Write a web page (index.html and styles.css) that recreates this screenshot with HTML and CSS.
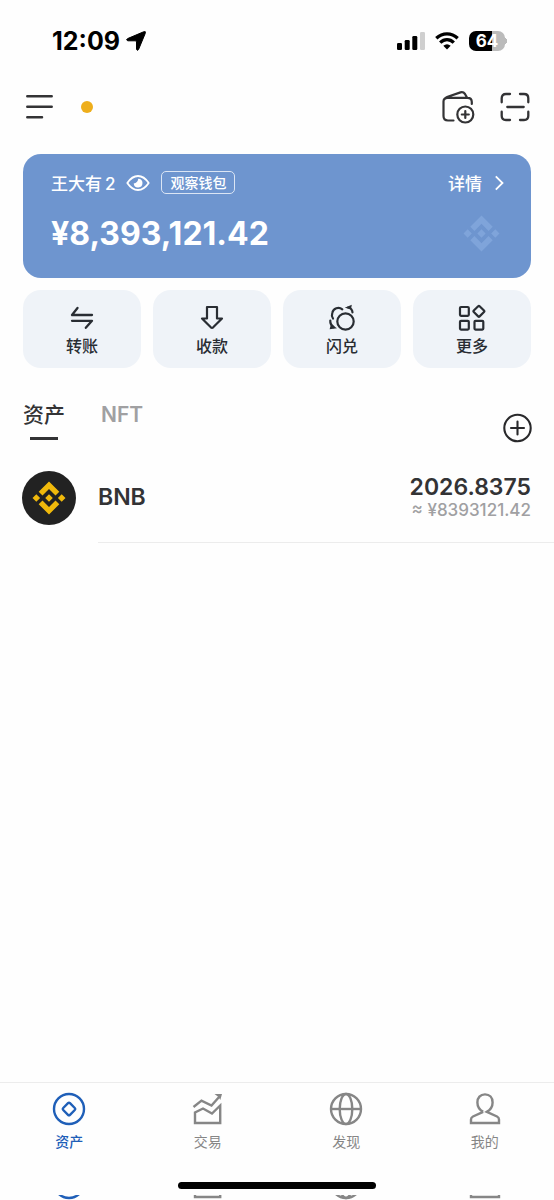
FILE: index.html
```html
<!DOCTYPE html>
<html lang="zh-CN">
<head>
<meta charset="utf-8">
<meta name="viewport" content="width=device-width, initial-scale=1">
<title>资产</title>
<link rel="stylesheet" href="styles.css">
</head>
<body>
<svg class="sprite" aria-hidden="true">
  <symbol id="bnb" viewBox="0 0 34 34">
    <path d="M17 0.5 27.3 10.8 23.5 14.6 17 8.1 10.5 14.6 6.7 10.8ZM6.7 23.2 10.5 19.4 17 25.9 23.5 19.4 27.3 23.2 17 33.5ZM17 13.2 20.8 17 17 20.8 13.2 17ZM4.3 13.2 8.1 17 4.3 20.8 0.5 17ZM29.7 13.2 33.5 17 29.7 20.8 25.9 17Z" fill="currentColor"/>
  </symbol>
  <symbol id="nav-assets" viewBox="0 0 34 34">
    <g fill="none" stroke="currentColor" stroke-width="2.4"><circle cx="17" cy="17" r="15"/><rect x="12.2" y="12.2" width="9.6" height="9.6" rx="1.4" transform="rotate(45 17 17)"/></g>
  </symbol>
  <symbol id="nav-trade" viewBox="0 0 34 34">
    <path d="M2.5 15 10.5 8.6 20.5 13.6 28.5 4.5M4 31V20.5L12 16.5 21 21.5 29.2 13.5V31Z" fill="none" stroke="currentColor" stroke-width="2.4"/>
    <path d="M23.5 2H31L29.3 8 27.5 5Z" fill="currentColor"/>
  </symbol>
  <symbol id="nav-discover" viewBox="0 0 34 34">
    <g fill="none" stroke="currentColor" stroke-width="2.4"><circle cx="17" cy="17" r="15"/><ellipse cx="17" cy="17" rx="6.3" ry="15"/><path d="M2 17H32"/></g>
  </symbol>
  <symbol id="nav-me" viewBox="0 0 34 34">
    <path d="M15.2 19.8C10.5 17.2 9.4 14 9.4 10.4C9.4 5.6 12.3 2.4 17 2.4S24.6 5.6 24.6 10.4C24.6 14 23.5 17.2 18.8 19.8L29 24.5Q31 25.6 31 27.5V31H3V27.5Q3 25.6 5 24.5L15.2 19.8" fill="none" stroke="currentColor" stroke-width="2.4"/>
  </symbol>
</svg>

<div class="app">
  <header>
    <div class="status">
      <div class="status-side">
        <time class="clock">12:09</time>
        <svg width="20" height="20" viewBox="0 0 20 20"><path d="M17.6.8Q20.2-.2 19.2 2.5L12.6 18.4Q11.6 20.2 10.5 18.4V11Q10.5 9.8 9.3 9.8H1.8Q-.5 9 1.6 7.6Z" stroke="#000" stroke-linejoin="round"/></svg>
      </div>
      <div class="status-side status-icons">
        <svg width="28" height="18" viewBox="0 0 28 18"><rect y="11" width="5" height="7" rx="1.3"/><rect x="7.7" y="8" width="5" height="10" rx="1.3"/><rect x="15.3" y="4" width="5" height="14" rx="1.3"/><rect x="23" width="5" height="18" rx="1.3" fill="#cfcfcf"/></svg>
        <svg width="24" height="18" viewBox="0 0 24 18"><g fill="none" stroke="#000" stroke-width="3.3"><path d="M1.3 6.2Q6 1.8 12 1.8T22.7 6.2"/><path d="M5.2 10.6Q8.2 7.6 12 7.6T18.8 10.6"/></g><path d="M8.3 13.8Q12 10.8 15.7 13.8L12 17.6Z"/></svg>
        <div class="battery"><span class="battery-level">64</span></div>
      </div>
    </div>
    <div class="toolbar">
      <div class="toolbar-side">
        <button class="icon-button" aria-label="菜单"><svg width="28" height="26" viewBox="0 0 28 26"><path d="M2.3 2.2H26.7M2.3 12.8H26.7M2.3 23.2H17" fill="none" stroke="#333335" stroke-width="2.5" stroke-linecap="round"/></svg></button>
        <span class="network-dot"></span>
      </div>
      <div class="toolbar-side">
        <button class="icon-button" aria-label="添加钱包"><svg width="34" height="34" viewBox="0 0 34 34"><g fill="none" stroke="#333335" stroke-width="2.2" stroke-linecap="round" stroke-linejoin="round"><path d="M11.5 30.5H6Q1.5 30.5 1.5 26V11.5Q1.5 7.8 5.5 7.8H25.5Q29.8 7.8 29.8 12V14M2.4 9.3Q3 7.7 5 7L18.5 2.4Q21.2 1.5 23 4L25 7.5"/><circle cx="23.3" cy="24.5" r="8"/><path d="M19.8 24.5H26.8M23.3 21V28"/></g></svg></button>
        <button class="icon-button" aria-label="扫一扫"><svg width="30" height="30" viewBox="0 0 30 30"><path d="M10 2H6Q1.7 2 1.7 6.3V10.3M20 2H24Q28.3 2 28.3 6.3V10.3M1.7 19.7V23.7Q1.7 28 6 28H10M28.3 19.7V23.7Q28.3 28 24 28H20M7.3 15H23.7" fill="none" stroke="#333335" stroke-width="2.3" stroke-linecap="round"/></svg></button>
      </div>
    </div>
  </header>

  <main>
    <section class="card">
      <div class="card-top">
        <span class="wallet-name">王大有<span class="wallet-number">2</span></span>
        <button class="icon-button" aria-label="隐藏余额"><svg width="24" height="18" viewBox="0 0 24 18"><path d="M1.3 9Q6 2 12 2T22.7 9Q18 16 12 16T1.3 9Z" fill="none" stroke="#fff" stroke-width="1.8" stroke-linejoin="round"/><path d="M12.2 4.7A4.4 4.4 0 1 1 7.7 9.5Q11.7 9 12.2 4.7Z" fill="#fff"/></svg></button>
        <span class="tag">观察钱包</span>
        <a class="detail" href="#">详情<svg width="10" height="16" viewBox="0 0 10 16"><path d="M1.8 1.3 8.5 8 1.8 14.7" fill="none" stroke="#fff" stroke-width="1.8"/></svg></a>
      </div>
      <div class="card-bottom">
        <strong class="balance">¥8,393,121.42</strong>
        <svg class="card-logo" width="37" height="37"><use href="#bnb"/></svg>
      </div>
    </section>

    <div class="actions">
      <button class="action"><svg width="28" height="28" viewBox="0 0 28 28"><path d="M9.5 4 4 11H24M4 16.8H24L17.8 23.8" fill="none" stroke="#292d33" stroke-width="2.3" stroke-linecap="round" stroke-linejoin="round"/></svg>转账</button>
      <button class="action"><svg width="28" height="28" viewBox="0 0 28 28"><path d="M9 3H19V14.5H24L15.2 23.3Q14 24.3 12.8 23.3L4 14.5H9Z" fill="none" stroke="#292d33" stroke-width="2.2" stroke-linejoin="round"/></svg>收款</button>
      <button class="action"><svg width="28" height="28" viewBox="0 0 28 28"><g fill="none" stroke="#292d33" stroke-width="2.2" stroke-linecap="round"><circle cx="17.5" cy="17.5" r="8.2"/><path d="M5 14.5A6.4 6.4 0 0 1 4.3 8.8A6.2 6.2 0 0 1 14.3 5.3M20 3.5Q24.2 4.5 24.5 8.3M2.3 16.5Q2 20.5 5.5 23"/></g><path d="M16.8 3.8 23.8.8 23 5.2ZM1.6 25.2 3 20.2 9 24.3Z" fill="#292d33"/></svg>闪兑</button>
      <button class="action"><svg width="28" height="28" viewBox="0 0 28 28"><g fill="none" stroke="#292d33" stroke-width="2.2"><rect x="2" y="3" width="8.8" height="8.8" rx="1"/><rect x="2" y="16.8" width="8.8" height="8.8" rx="1"/><rect x="16.5" y="16.8" width="8.8" height="8.8" rx="1"/><rect x="16.8" y="3.2" width="8.2" height="8.2" rx="1" transform="rotate(45 20.9 7.3)"/></g></svg>更多</button>
    </div>

    <div class="tabs">
      <button class="tab tab-active">资产</button>
      <button class="tab">NFT</button>
      <button class="icon-button add-token" aria-label="添加资产"><svg width="30" height="30" viewBox="0 0 30 30"><g fill="none" stroke="#29292b" stroke-width="2.1" stroke-linecap="round"><circle cx="15.5" cy="15" r="13.2"/><path d="M9 15H22M15.5 8.5V21.5"/></g></svg></button>
    </div>

    <div class="token">
      <span class="token-logo"><svg width="34" height="34"><use href="#bnb"/></svg></span>
      <div class="token-body">
        <span class="token-name">BNB</span>
        <div class="token-values">
          <span class="token-amount">2026.8375</span>
          <span class="token-fiat">≈ ¥8393121.42</span>
        </div>
      </div>
    </div>
  </main>

  <footer>
    <nav class="nav">
      <a class="nav-item nav-active" href="#"><svg width="34" height="34"><use href="#nav-assets"/></svg>资产</a>
      <a class="nav-item" href="#"><svg width="34" height="34"><use href="#nav-trade"/></svg>交易</a>
      <a class="nav-item" href="#"><svg width="34" height="34"><use href="#nav-discover"/></svg>发现</a>
      <a class="nav-item" href="#"><svg width="34" height="34"><use href="#nav-me"/></svg>我的</a>
    </nav>
    <div class="home-indicator"></div>
    <div class="edge" aria-hidden="true">
      <span class="edge-item nav-active"><svg width="34" height="34"><use href="#nav-assets"/></svg></span>
      <span class="edge-item"><svg width="34" height="34"><use href="#nav-trade"/></svg></span>
      <span class="edge-item"><svg width="34" height="34"><use href="#nav-discover"/></svg></span>
      <span class="edge-item"><svg width="34" height="34"><use href="#nav-me"/></svg></span>
    </div>
  </footer>
</div>
</body>
</html>
```

FILE: styles.css
```css
* { box-sizing: border-box; }

body {
  margin: 0;
  background: #fefefe;
  color: #333335;
  font-family: Inter, "Noto Sans CJK SC", sans-serif;
}

button {
  padding: 0;
  border: 0;
  background: none;
  color: inherit;
  font: inherit;
}

a { color: inherit; text-decoration: none; }
svg { display: block; flex: none; }
.sprite { position: absolute; width: 0; height: 0; }

.app {
  display: flex;
  flex-direction: column;
  min-height: 100vh;
}

main { flex: 1; }

.status {
  display: flex;
  justify-content: space-between;
  align-items: center;
  height: 82px;
  padding: 0 46px 0 52px;
}

.status-side { display: flex; align-items: center; gap: 6px; }
.status-icons { gap: 10px; }

.clock {
  color: #000;
  font-size: 25px;
  font-weight: 700;
}

.battery {
  display: flex;
  align-items: center;
  width: 39px;
  background: radial-gradient(circle at 34px 50%, #bbb 4px, transparent 4px);
}

.battery-level {
  width: 36px;
  border-radius: 7px;
  background: linear-gradient(90deg, #000 64%, #bbb 64%);
  color: #fff;
  font-size: 17px;
  font-weight: 700;
  line-height: 20px;
  text-align: center;
}

.toolbar {
  display: flex;
  justify-content: space-between;
  align-items: center;
  height: 50px;
  padding: 0 24px 0 25px;
}

.toolbar-side { display: flex; align-items: center; gap: 24px; }

.network-dot {
  width: 12px;
  height: 12px;
  margin-left: 4px;
  border-radius: 50%;
  background: #eeae1b;
}

.card {
  margin: 22px 23px 12px;
  padding: 16px 27px 16px 28px;
  height: 124px;
  border-radius: 18px;
  background: #6e95cf;
  color: #fff;
}

.card-top {
  display: flex;
  align-items: center;
  gap: 11px;
  height: 25px;
}

.wallet-name { font-size: 17px; font-weight: 500; }
.wallet-number { margin-left: 3px; }

.tag {
  padding: 0 8px;
  border: 1px solid #dbe5f4;
  border-radius: 5px;
  font-size: 14px;
  font-weight: 500;
  line-height: 21px;
}

.detail {
  display: flex;
  align-items: center;
  gap: 12px;
  margin-left: auto;
  font-size: 17px;
  font-weight: 500;
}

.card-bottom {
  display: flex;
  justify-content: space-between;
  align-items: center;
  margin-top: 20px;
  padding-right: 4px;
}

.balance { font-size: 32px; font-weight: 700; line-height: 36px; }
.card-logo { color: #7fa4da; }

.actions {
  display: grid;
  grid-template-columns: repeat(4, 1fr);
  gap: 12px;
  margin: 0 23px;
}

.action {
  display: flex;
  flex-direction: column;
  align-items: center;
  height: 78px;
  padding-top: 14px;
  border-radius: 18px;
  background: #eff3f8;
  color: #292d33;
  font-size: 16px;
  font-weight: 500;
  line-height: 28px;
}

.tabs {
  display: flex;
  align-items: flex-start;
  gap: 36px;
  padding: 32px 22px 0 23px;
}

.tab {
  color: #a0a0a2;
  font-size: 21px;
  font-weight: 600;
  line-height: 30px;
}

.tab-active {
  display: flex;
  flex-direction: column;
  align-items: center;
  gap: 7px;
  color: #333335;
  font-weight: 500;
}

.tab-active::after {
  content: "";
  width: 28px;
  height: 3px;
  background: #333335;
}

.add-token { margin: 13px 0 0 auto; }

.token {
  display: flex;
  align-items: center;
  gap: 22px;
  margin-top: 9px;
  padding-left: 22px;
}

.token-logo {
  display: grid;
  place-items: center;
  width: 54px;
  height: 54px;
  border-radius: 50%;
  background: #222;
  color: #f0b90b;
}

.token-body {
  display: flex;
  flex: 1;
  justify-content: space-between;
  align-items: center;
  height: 91px;
  padding-right: 23px;
  border-bottom: 1px solid #ececec;
}

.token-name { font-size: 23px; font-weight: 600; }

.token-values {
  display: flex;
  flex-direction: column;
  align-items: flex-end;
}

.token-amount { font-size: 23px; font-weight: 600; line-height: 26px; }

.token-fiat {
  color: #a0a0a2;
  font-size: 17px;
  font-weight: 500;
  line-height: 20px;
}

.nav {
  display: grid;
  grid-template-columns: repeat(4, 1fr);
  padding-top: 9px;
  border-top: 1px solid #ececec;
  color: #868686;
}

.nav-item {
  display: flex;
  flex-direction: column;
  align-items: center;
  gap: 5px;
  font-size: 14px;
  line-height: 22px;
}

.nav-active { color: #1f5fb8; font-weight: 500; }

.home-indicator {
  width: 198px;
  height: 7px;
  margin: 29px auto 6px;
  border-radius: 4px;
  background: #000;
}

.edge {
  display: grid;
  grid-template-columns: repeat(4, 1fr);
  height: 5px;
  overflow: hidden;
  color: #868686;
}

.edge-item {
  display: flex;
  justify-content: center;
  align-items: flex-end;
  height: 5px;
}
```
